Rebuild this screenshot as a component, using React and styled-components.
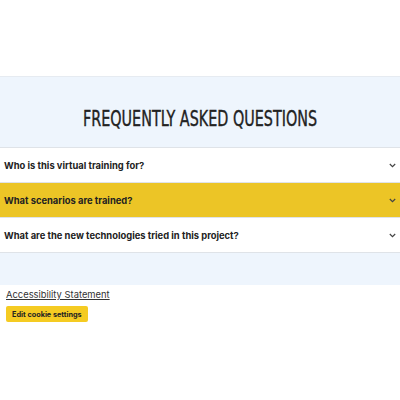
import React from 'react'
import styled, { createGlobalStyle } from 'styled-components'

const GlobalStyle = createGlobalStyle`
  html, body {
    margin: 0;
    padding: 0;
    background: #ffffff;
    font-family: Inter, "Noto Sans", sans-serif;
  }
`

const questions = [
  { label: 'Who is this virtual training for?', active: false },
  { label: 'What scenarios are trained?', active: true },
  { label: 'What are the new technologies tried in this project?', active: false },
]

const Chevron = () => (
  <svg width="7" height="5" viewBox="0 0 7 5" fill="none">
    <path d="M0.8 1l2.7 2.6L6.2 1" stroke="#444" strokeWidth="1.2" />
  </svg>
)

const FaqRow = ({ label, active }) => (
  <Row $active={active}>
    <Question>{label}</Question>
    <Chevron />
  </Row>
)

const App = () => (
  <>
    <GlobalStyle />
    <Spacer />
    <FaqSection>
      <Title>
        <TitleText>FREQUENTLY ASKED QUESTIONS</TitleText>
      </Title>
      <List>
        {questions.map((q) => (
          <FaqRow key={q.label} label={q.label} active={q.active} />
        ))}
      </List>
    </FaqSection>
    <Footer>
      <FooterLink href="#">Accessibility Statement</FooterLink>
      <CookieButton>Edit cookie settings</CookieButton>
    </Footer>
  </>
)

const Spacer = styled.div`
  height: 76px;
`

const FaqSection = styled.section`
  background: #eef5fd;
  border-top: 1px solid #e6ebf1;
  padding: 30px 0 32px;
`

const Title = styled.h2`
  margin: 0 0 16px;
  text-align: center;
  font-family: "DejaVu Sans Condensed", "Liberation Sans Narrow", sans-serif;
  font-weight: 400;
  font-size: 21px;
  line-height: 24px;
  color: #222;
  -webkit-text-stroke: 0.35px #222;
`

const TitleText = styled.span`
  display: inline-block;
  transform: scaleX(0.76);
`

const List = styled.div`
  display: flex;
  flex-direction: column;
  border-top: 1px solid #dfe3e8;
`

const Row = styled.div`
  display: flex;
  align-items: center;
  justify-content: space-between;
  height: 34px;
  padding: 0 4px 0 4px;
  background: ${(p) => (p.$active ? '#ecc526' : '#ffffff')};
  border-bottom: 1px solid #dfe3e8;
`

const Question = styled.span`
  font-size: 9.4px;
  font-weight: 700;
  color: #222;
`

const Footer = styled.div`
  display: flex;
  flex-direction: column;
  align-items: flex-start;
  gap: 6px;
  padding: 4px 6px;
`

const FooterLink = styled.a`
  font-size: 9.4px;
  color: #333;
  text-decoration: underline;
`

const CookieButton = styled.button`
  border: none;
  border-radius: 2px;
  background: #f5cb22;
  color: #222;
  font-family: Inter, "Noto Sans", sans-serif;
  font-size: 7.3px;
  font-weight: 700;
  padding: 4px 6px;
  height: 16px;
`

export default App
